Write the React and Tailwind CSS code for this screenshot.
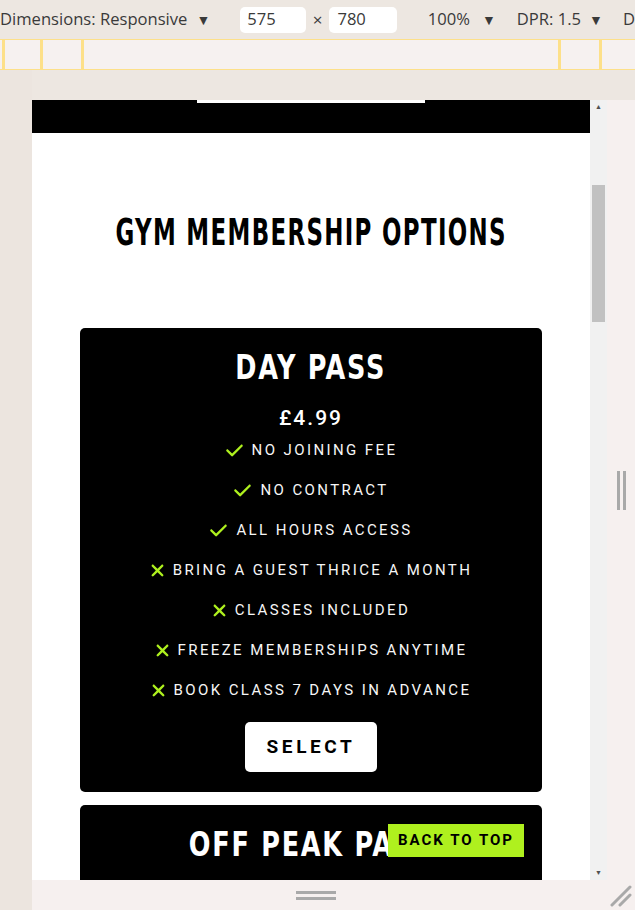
import React from 'react';

const features = [
  { ok: true, text: 'No joining fee' },
  { ok: true, text: 'No contract' },
  { ok: true, text: 'All hours access' },
  { ok: false, text: 'Bring a guest thrice a month' },
  { ok: false, text: 'Classes included' },
  { ok: false, text: 'Freeze memberships anytime' },
  { ok: false, text: 'Book class 7 days in advance' },
];

function Check() {
  return (
    <svg viewBox="0 0 512 512" className="w-[19px] h-[19px] fill-[#aef01e]">
      <path d="M470.6 105.4c12.5 12.5 12.5 32.8 0 45.3l-256 256c-12.5 12.5-32.8 12.5-45.3 0l-128-128c-12.5-12.5-12.5-32.8 0-45.3s32.8-12.5 45.3 0L192 338.7 425.4 105.4c12.5-12.5 32.8-12.5 45.3 0z" />
    </svg>
  );
}

function Cross() {
  return (
    <svg viewBox="0 0 384 512" className="w-[15px] h-[19px] fill-[#aef01e]">
      <path d="M342.6 150.6c12.5-12.5 12.5-32.8 0-45.3s-32.8-12.5-45.3 0L192 210.7 86.6 105.4c-12.5-12.5-32.8-12.5-45.3 0s-12.5 32.8 0 45.3L146.7 256 41.4 361.4c-12.5 12.5-12.5 32.8 0 45.3s32.8 12.5 45.3 0L192 301.3 297.4 406.6c12.5 12.5 32.8 12.5 45.3 0s12.5-32.8 0-45.3L237.3 256 342.6 150.6z" />
    </svg>
  );
}

function Card({ title, price, short }) {
  return (
    <div className="bg-black rounded-[5px] flex flex-col items-center pt-[20px] pb-[20px] text-white">
      <div className="w-full flex justify-center">
        <h3 className="inline-block font-['DejaVu_Sans'] font-stretch-condensed text-[33px] font-bold tracking-[2px] uppercase leading-[40px] whitespace-nowrap scale-x-[0.86]">
          {title}
        </h3>
      </div>
      {!short && (
        <>
          <div className="font-['Roboto'] text-[21px] font-medium tracking-[2px] mt-[16px] leading-[28px]">{price}</div>
          <ul className="flex flex-col items-center mt-[8px]">
            {features.map((f) => (
              <li key={f.text} className="h-[40px] flex items-start gap-[8px] font-['Roboto'] text-[15px] tracking-[2.4px] uppercase text-[#f6f6f6]">
                <span className="h-[20px] flex items-center">{f.ok ? <Check /> : <Cross />}</span>
                <span className="leading-[20px]">{f.text}</span>
              </li>
            ))}
          </ul>
          <button className="bg-white text-black rounded-[5px] w-[132px] h-[50px] font-['Roboto'] font-bold text-[19px] tracking-[3.6px] uppercase mt-[2px]">
            Select
          </button>
        </>
      )}
    </div>
  );
}

export default function App() {
  return (
    <div className="w-[635px] h-[910px] bg-[#ede7e1] overflow-hidden flex flex-col font-['Open_Sans'] text-[#333]">
      {/* toolbar */}
      <div className="h-[39px] flex items-center text-[16.6px] text-[#3a3a3a] whitespace-nowrap">
        <span>Dimensions: Responsive</span>
        <span className="ml-[9px] text-[14px]">▼</span>
        <div className="ml-[30px] w-[66px] h-[26px] bg-white rounded-[5px] flex items-center pl-[7px]">575</div>
        <span className="mx-[7px] text-[17px]">×</span>
        <div className="w-[68px] h-[26px] bg-white rounded-[5px] flex items-center pl-[8px]">780</div>
        <span className="ml-[31px]">100%</span>
        <span className="ml-[12px] text-[14px]">▼</span>
        <span className="ml-[21px]">DPR: 1.5</span>
        <span className="ml-[8px] text-[14px]">▼</span>
        <span className="ml-[20px]">D</span>
      </div>
      {/* ruler */}
      <div className="h-[31px] bg-[#f6f1f0] border-y border-[#fde089] flex">
        <div className="w-[2px]"></div>
        <div className="w-[3px] bg-[#fde089]"></div>
        <div className="w-[35px]"></div>
        <div className="w-[3px] bg-[#fde089]"></div>
        <div className="w-[38px]"></div>
        <div className="w-[3px] bg-[#fde089]"></div>
        <div className="w-[474px]"></div>
        <div className="w-[3px] bg-[#fde089]"></div>
        <div className="w-[38px]"></div>
        <div className="w-[3px] bg-[#fde089]"></div>
      </div>
      <div className="flex flex-1">
        <div className="w-[32px] bg-[#ece5df]"></div>
        <div className="flex-1 flex flex-col">
          <div className="h-[30px] bg-[#ede7e1]"></div>
          <div className="flex h-[780px]">
            {/* page viewport */}
            <div className="relative w-[558px] h-[780px] bg-white overflow-hidden">
              <div className="h-[33px] bg-black flex justify-center">
                <div className="w-[228px] h-[3px] bg-white"></div>
              </div>
              <div className="flex justify-center mt-[79px]">
                <h2 className="inline-block whitespace-nowrap font-['DejaVu_Sans'] font-stretch-condensed text-[38px] font-bold tracking-[2px] text-black leading-[40px] scale-x-[0.67]">
                  GYM MEMBERSHIP OPTIONS
                </h2>
              </div>
              <div className="mx-[48px] mt-[76px] flex flex-col gap-[13px]">
                <Card title="Day Pass" price="£4.99" />
                <Card title="Off Peak Pass" short />
              </div>
              <a className="absolute right-[66px] bottom-[23px] bg-[#aff01e] h-[33px] w-[136px] flex items-center justify-center font-['Roboto'] font-bold text-[15px] tracking-[2px] text-black">
                BACK TO TOP
              </a>
            </div>
            {/* scrollbar */}
            <div className="w-[17px] bg-[#f1f1f1] flex flex-col items-center">
              <div className="h-[14px] flex items-center text-[7px] text-[#505050]">▲</div>
              <div className="w-[13px] h-[137px] bg-[#c1c1c1] mt-[71px]"></div>
              <div className="flex-1"></div>
              <div className="h-[14px] flex items-center text-[7px] text-[#505050]">▼</div>
            </div>
            {/* right panel */}
            <div className="flex-1 bg-[#f6f0ef] flex items-center justify-center gap-[3px]">
              <div className="w-[3px] h-[39px] bg-[#a9a9a9]"></div>
              <div className="w-[3px] h-[39px] bg-[#a9a9a9]"></div>
            </div>
          </div>
          {/* bottom bar */}
          <div className="h-[30px] bg-[#f6f0ef] relative flex flex-col items-center pt-[11px] gap-[3px] pr-[35px]">
            <div className="w-[40px] h-[3px] bg-[#a9a9a9]"></div>
            <div className="w-[40px] h-[3px] bg-[#a9a9a9]"></div>
            <svg className="absolute right-[3px] bottom-[3px]" width="22" height="22" viewBox="0 0 22 22">
              <line x1="2" y1="20" x2="20" y2="2" stroke="#a9a9a9" strokeWidth="3" strokeLinecap="round" />
              <line x1="10" y1="20" x2="20" y2="10" stroke="#a9a9a9" strokeWidth="3" strokeLinecap="round" />
            </svg>
          </div>
        </div>
      </div>
    </div>
  );
}
